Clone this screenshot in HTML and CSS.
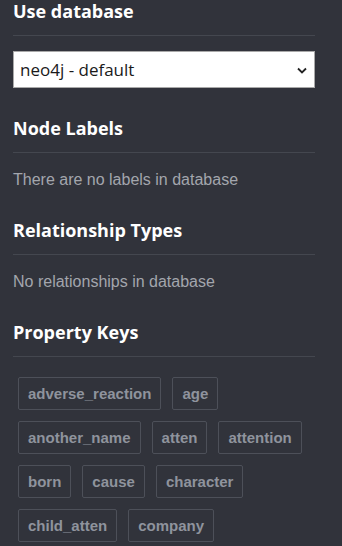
FILE: index.html
```html
<!DOCTYPE html>
<html lang="en">
<head>
  <meta charset="UTF-8">
  <meta name="viewport" content="width=device-width, initial-scale=1.0">
  <title>Database Information</title>
  <link rel="stylesheet" href="styles.css">
</head>
<body>
  <div class="drawer">
    <section class="drawer-section">
      <h3 class="drawer-title">Use database</h3>
      <div class="db-select">
        <span>neo4j - default</span>
        <svg class="chevron" width="10" height="7" viewBox="0 0 10 7">
          <path d="M1 1.5 L5 5.5 L9 1.5" fill="none" stroke="#222" stroke-width="1.8"/>
        </svg>
      </div>
    </section>

    <section class="drawer-section">
      <h3 class="drawer-title">Node Labels</h3>
      <p class="empty">There are no labels in database</p>
    </section>

    <section class="drawer-section">
      <h3 class="drawer-title">Relationship Types</h3>
      <p class="empty">No relationships in database</p>
    </section>

    <section class="drawer-section">
      <h3 class="drawer-title">Property Keys</h3>
      <div class="tags">
        <span class="tag">adverse_reaction</span>
        <span class="tag">age</span>
        <span class="tag">another_name</span>
        <span class="tag">atten</span>
        <span class="tag">attention</span>
        <span class="tag">born</span>
        <span class="tag">cause</span>
        <span class="tag">character</span>
        <span class="tag">child_atten</span>
        <span class="tag">company</span>
      </div>
    </section>
  </div>
</body>
</html>
```

FILE: styles.css
```css
* {
  box-sizing: border-box;
  margin: 0;
  padding: 0;
}

body {
  background: #31333b;
  font-family: 'Liberation Sans', Arial, sans-serif;
  overflow: hidden;
}

.drawer {
  width: 342px;
  padding: 0 27px 0 13px;
}

.drawer-section {
  margin-bottom: 29px;
}

.drawer-title {
  font-family: 'Open Sans', sans-serif;
  font-weight: 700;
  font-size: 18px;
  line-height: 22px;
  color: #ffffff;
  padding-bottom: 13px;
  border-bottom: 1px solid #44474f;
}

.db-select {
  margin-top: 15px;
  height: 37px;
  background: #ffffff;
  border: 1px solid #a9a9a9;
  display: flex;
  align-items: center;
  justify-content: space-between;
  padding: 0 7px 0 6px;
  font-family: 'Open Sans', sans-serif;
  font-size: 17px;
  color: #1a1a1a;
}

.chevron {
  margin-top: 1px;
}

.empty {
  margin-top: 16px;
  font-size: 16px;
  line-height: 21px;
  color: #a3a6ad;
}

.tags {
  margin-top: 20px;
  padding-left: 5px;
  display: flex;
  flex-wrap: wrap;
  gap: 11px 11px;
}

.tag {
  display: inline-block;
  padding: 7px 9px;
  border: 1px solid #4d5059;
  border-radius: 2px;
  font-size: 15px;
  font-weight: 700;
  line-height: 17px;
  color: #8f939d;
}
```
